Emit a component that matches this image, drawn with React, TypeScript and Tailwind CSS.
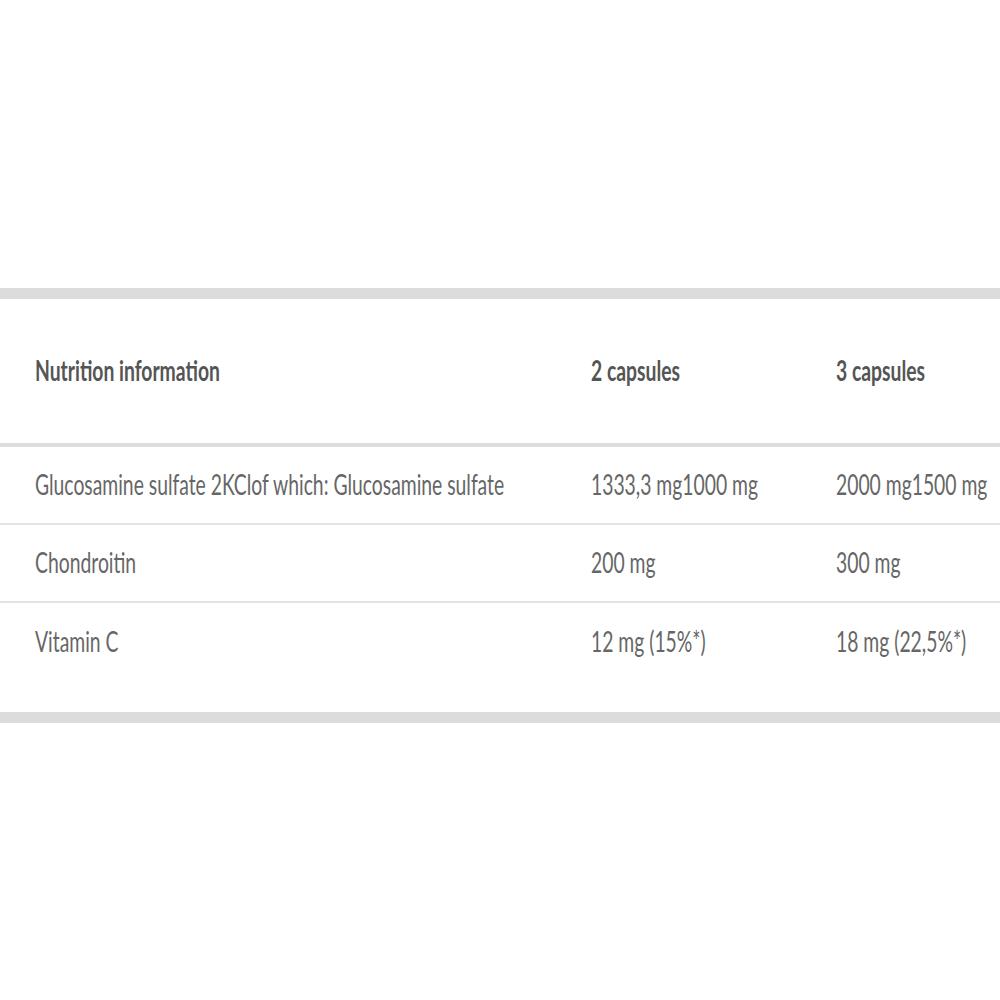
const rows = [
  { name: "Glucosamine sulfate 2KClof which: Glucosamine sulfate", two: "1333,3 mg1000 mg", three: "2000 mg1500 mg" },
  { name: "Chondroitin", two: "200 mg", three: "300 mg" },
  { name: "Vitamin C", two: "12 mg (15%*)", three: "18 mg (22,5%*)" },
]

function Cell({ text, bold }: { text: string; bold?: boolean }) {
  return (
    <span
      className={
        "inline-block origin-left scale-x-[0.69] whitespace-nowrap text-[28px] leading-none " +
        (bold ? "font-bold text-[#555555]" : "font-normal text-[#666666]")
      }
    >
      {text}
    </span>
  )
}

export default function App() {
  return (
    <div className="w-[1000px] h-[1000px] bg-white overflow-hidden pt-[288px] font-['Lato','Liberation_Sans',sans-serif]">
      <div className="h-[11px] bg-[#dcdcdc]" />

      {/* header */}
      <div className="grid grid-cols-[591px_245px_164px] h-[148px] items-center border-b-4 border-[#dddddd]">
        <div className="pl-[35px]">
          <Cell text="Nutrition information" bold />
        </div>
        <div>
          <Cell text="2 capsules" bold />
        </div>
        <div>
          <Cell text="3 capsules" bold />
        </div>
      </div>

      {/* rows */}
      {rows.map((r, i) => (
        <div
          key={r.name}
          className={
            "grid grid-cols-[591px_245px_164px] " +
            (i < rows.length - 1 ? "h-[78px] items-center border-b-2 border-[#e3e3e3]" : "h-[109px] items-start pt-[24px]")
          }
        >
          <div className="pl-[35px]">
            <Cell text={r.name} />
          </div>
          <div>
            <Cell text={r.two} />
          </div>
          <div>
            <Cell text={r.three} />
          </div>
        </div>
      ))}

      <div className="h-[11px] bg-[#dcdcdc]" />
    </div>
  )
}
